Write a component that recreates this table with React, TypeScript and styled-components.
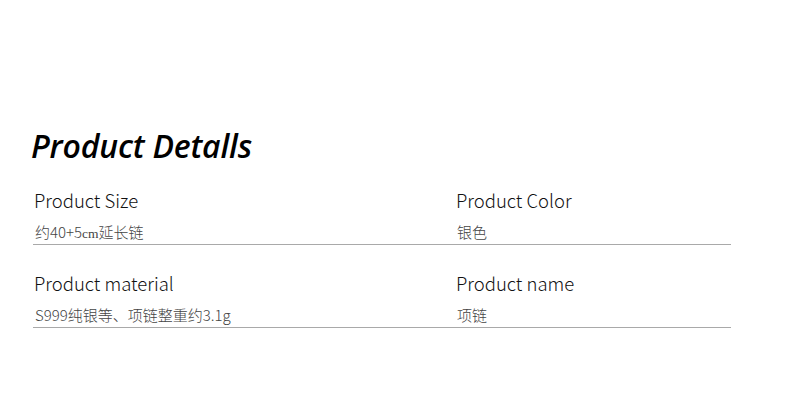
import React from 'react';
import styled, { createGlobalStyle } from 'styled-components';

const GlobalStyle = createGlobalStyle`
  html, body {
    margin: 0;
    padding: 0;
    background: #fff;
  }
  body {
    font-family: "Noto Sans CJK SC", "Noto Sans", sans-serif;
  }
`;

const Page = styled.div`
  width: 790px;
  height: 402px;
  box-sizing: border-box;
  padding: 126px 0 0 33px;
  overflow: hidden;
`;

const Title = styled.h1`
  margin: 0 0 0 -2px;
  font-family: "Open Sans", "Noto Sans", sans-serif;
  font-size: 32px;
  line-height: 40px;
  font-weight: 600;
  font-style: italic;
  color: #000;
  letter-spacing: -0.2px;
`;

const Table = styled.div`
  margin-top: 22px;
  width: 698px;
  display: flex;
  flex-direction: column;
  gap: 26px;
`;

const Row = styled.div`
  display: grid;
  grid-template-columns: 422px 1fr;
  border-bottom: 1px solid #a9a9a9;
  padding-bottom: 2px;
`;

const Cell = styled.div`
  display: flex;
  flex-direction: column;
  gap: 10px;
  padding-left: 1px;
`;

const Label = styled.div`
  font-size: 18.5px;
  line-height: 24px;
  font-weight: 300;
  color: #111;
`;

const Value = styled.div`
  height: 20px;
  font-size: 15px;
  line-height: 20px;
  font-weight: 300;
  color: #444;
  padding-left: 1px;
`;

const SerifUnit = styled.span`
  font-family: "Liberation Serif", serif;
  font-size: 13.5px;
  line-height: 1;
`;

interface Detail {
  label: string;
  value: React.ReactNode;
}

const rows: Detail[][] = [
  [
    {
      label: 'Product Size',
      value: (
        <>
          约40+5<SerifUnit>cm</SerifUnit>延长链
        </>
      )
    },
    { label: 'Product Color', value: '银色' }
  ],
  [
    { label: 'Product material', value: 'S999纯银等、项链整重约3.1g' },
    { label: 'Product name', value: '项链' }
  ]
];

export const App = () => {
  return (
    <Page>
      <GlobalStyle />
      <Title>Product Detalls</Title>
      <Table>
        {rows.map((row, i) => (
          <Row key={i}>
            {row.map((item) => (
              <Cell key={item.label}>
                <Label>{item.label}</Label>
                <Value>{item.value}</Value>
              </Cell>
            ))}
          </Row>
        ))}
      </Table>
    </Page>
  );
};

export default App;
